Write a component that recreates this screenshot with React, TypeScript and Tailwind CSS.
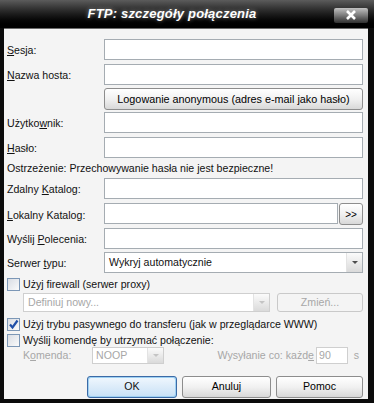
import type { ReactNode } from 'react';

function Field({ className = '' }: { className?: string }) {
  return <div className={`h-[21px] bg-white border border-[#a5acb2] ${className}`} />;
}

function Label({ children }: { children: ReactNode }) {
  return <div className="w-[97px] shrink-0 pt-[3px]">{children}</div>;
}

function Row({ label, children, className = '' }: { label: ReactNode; children?: ReactNode; className?: string }) {
  return (
    <div className={`flex items-center ${className}`}>
      <Label>{label}</Label>
      <div className="flex-1 flex">{children ?? <Field className="flex-1" />}</div>
    </div>
  );
}

function Arrow({ disabled }: { disabled?: boolean }) {
  return (
    <div className="w-[16px] h-full flex items-center justify-center border-l border-[#e3e3e3] bg-gradient-to-b from-[#fbfbfb] to-[#dadada]">
      <div
        className={`w-0 h-0 border-l-[3px] border-r-[3px] border-t-[3px] border-l-transparent border-r-transparent ${
          disabled ? 'border-t-[#c4c4c4]' : 'border-t-[#4d4d4d]'
        }`}
      />
    </div>
  );
}

function Btn({ children, className = '', disabled }: { children: ReactNode; className?: string; disabled?: boolean }) {
  return (
    <div
      className={`flex items-center justify-center rounded-[3px] border ${
        disabled
          ? 'border-[#c9c9c9] bg-[#f4f4f4] text-[#a7a7a7]'
          : 'border-[#8d8d8d] bg-gradient-to-b from-[#ffffff] via-[#f1f1f1] to-[#d8d8d8] text-black'
      } ${className}`}
    >
      {children}
    </div>
  );
}

function Check({ checked }: { checked?: boolean }) {
  return (
    <div className="w-[13px] h-[13px] shrink-0 border border-[#7c97b6] bg-gradient-to-br from-[#d9dde4] to-[#fbfbfb] flex items-center justify-center">
      {checked && (
        <svg width="11" height="11" viewBox="0 0 11 11">
          <path d="M2 5.5 L4.5 8.5 L9.5 1.5" fill="none" stroke="#1f4fa8" strokeWidth="2.2" />
        </svg>
      )}
    </div>
  );
}

export default function App() {
  return (
    <div className="w-[374px] h-[403px] bg-[#0b0b0b] flex flex-col font-['Liberation_Sans',Arial,sans-serif] text-[10.6px] text-[#111] overflow-hidden">
      <div className="h-[28px] shrink-0 relative bg-gradient-to-b from-[#5c5c5c] via-[#1c1c1c] to-[#000000] flex items-center">
        <div className="w-[334px] text-center pl-[10px] text-white italic font-bold text-[13px] tracking-[0.2px] [text-shadow:0_0_4px_rgba(255,255,255,0.45)]">
          FTP: szczegóły połączenia
        </div>
        <div className="w-[34px] h-[15px] mt-[2px] rounded-[2px] bg-gradient-to-b from-[#c2c2c2] via-[#7a7a7a] to-[#303030] flex items-center justify-center">
          <svg width="12" height="10" viewBox="0 0 12 10">
            <path d="M2 1 L10 9 M10 1 L2 9" stroke="#ffffff" strokeWidth="2.6" />
          </svg>
        </div>
      </div>
      <div className="flex-1 ml-[4px] mr-[6px] mb-[4px] bg-[#f4f4f4] border-t border-[#6a6a6a] pl-[3px] pr-[5px] pt-[10px] flex flex-col">
        <Row label={<><u>S</u>esja:</>} className="h-[21px]" />
        <Row label={<><u>N</u>azwa hosta:</>} className="h-[21px] mt-[4px]" />
        <div className="flex mt-[3px] h-[22px]">
          <div className="w-[97px] shrink-0" />
          <Btn className="flex-1 text-[10.8px]">Logowanie anonymous (adres e-mail jako hasło)</Btn>
        </div>
        <Row label={<>Użytko<u>w</u>nik:</>} className="h-[21px] mt-[2px]" />
        <Row label={<><u>H</u>asło:</>} className="h-[21px] mt-[4px]" />
        <div className="h-[20px] flex items-center pt-[2px]">Ostrzeżenie: Przechowywanie hasła nie jest bezpieczne!</div>
        <Row label={<>Zdalny <u>K</u>atalog:</>} className="h-[21px]" />
        <Row label={<><u>L</u>okalny Katalog:</>} className="h-[22px] mt-[4px]">
          <Field className="flex-1" />
          <Btn className="w-[24px] h-[22px] ml-[1px] text-[10px]">&gt;&gt;</Btn>
        </Row>
        <Row label={<>Wyślij <u>P</u>olecenia:</>} className="h-[21px] mt-[3px]" />
        <Row label={<>Serwer <u>t</u>ypu:</>} className="h-[21px] mt-[3px]">
          <div className="flex-1 h-[21px] bg-white border border-[#a5acb2] flex items-center">
            <span className="flex-1 pl-[4px] pt-[1px]">Wykryj automatycznie</span>
            <Arrow />
          </div>
        </Row>
        <div className="flex items-center h-[16px] mt-[3px] gap-[3px]">
          <Check />
          <span className="pt-[1px]">Użyj firewall (serwer proxy)</span>
        </div>
        <div className="flex h-[19px] mt-[1px] pl-[16px]">
          <div className="w-[247px] h-[19px] bg-white border border-[#cfcfcf] flex items-center">
            <span className="flex-1 pl-[4px] text-[#a7a7a7]">Definiuj nowy...</span>
            <Arrow disabled />
          </div>
          <Btn disabled className="flex-1 ml-[7px]">Zmień...</Btn>
        </div>
        <div className="flex items-center h-[16px] mt-[4px] gap-[3px]">
          <Check checked />
          <span className="pt-[1px]">Użyj trybu pasywnego do transferu (jak w przeglądarce WWW)</span>
        </div>
        <div className="flex items-center h-[14px] mt-[1px] gap-[3px]">
          <Check />
          <span className="pt-[1px]">Wyślij komendę by utrzymać połączenie:</span>
        </div>
        <div className="flex items-center h-[17px] text-[#a7a7a7]">
          <span className="w-[85px] pl-[16px] pt-[1px]">
            K<u>o</u>menda:
          </span>
          <div className="w-[72px] h-[17px] bg-white border border-[#cfcfcf] flex items-center">
            <span className="flex-1 pl-[3px]">NOOP</span>
            <Arrow disabled />
          </div>
          <span className="flex-1 text-right pr-[2px] pt-[1px]">
            Wysyłanie co: każd<u>e</u>
          </span>
          <div className="w-[32px] h-[17px] bg-white border border-[#cfcfcf] pl-[2px] leading-[15px]">90</div>
          <span className="w-[15px] text-right pr-[4px]">s</span>
        </div>
        <div className="flex justify-end gap-[5px] mt-[12px] h-[22px]">
          <div className="w-[90px] rounded-[3px] border border-[#3c6aa6] p-[1px] bg-[#9ed0f2]">
            <div className="h-full rounded-[2px] bg-gradient-to-b from-[#eef6fd] to-[#c9e1f6] flex items-center justify-center">
              OK
            </div>
          </div>
          <Btn className="w-[89px]">Anuluj</Btn>
          <Btn className="w-[87px]">Pomoc</Btn>
        </div>
      </div>
    </div>
  );
}
